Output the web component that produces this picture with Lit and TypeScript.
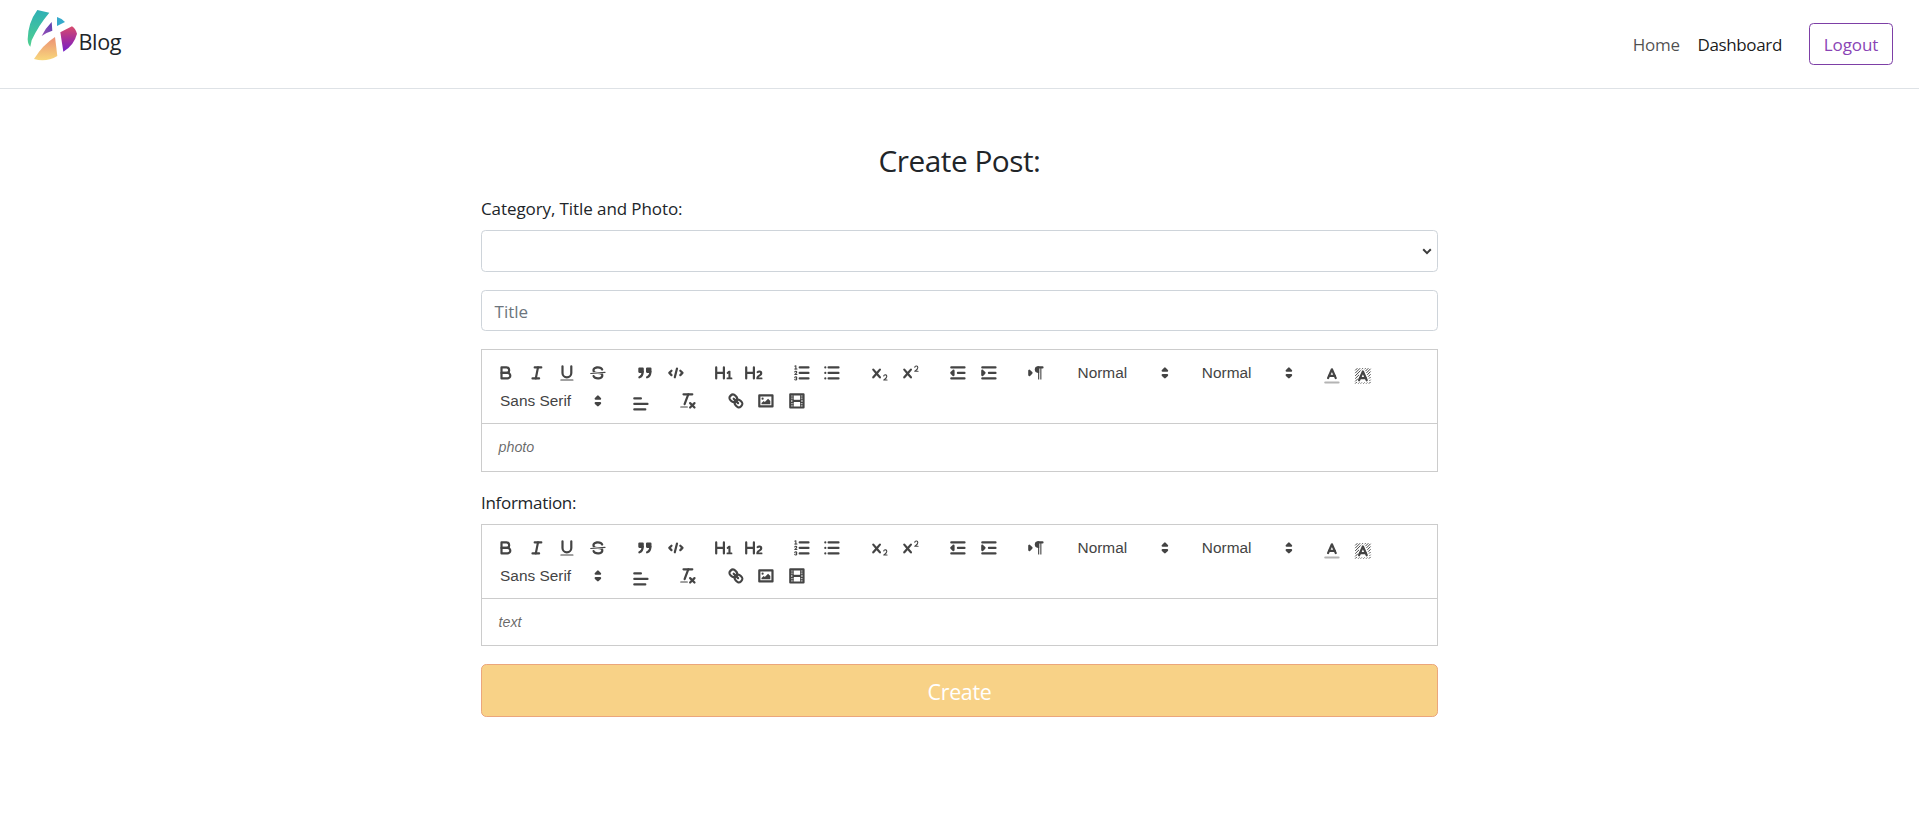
import { LitElement, html, svg, css } from "lit";
import { customElement, property } from "lit/decorators.js";

const crossMark = svg`<path class="f" d="M9.65,5.241a1,1,0,0,0-1.409.108L6,7.964,3.759,5.349A1,1,0,0,0,2.192,6.59178Q2.21541,6.6213,2.241,6.649L4.684,9.5,2.241,12.35A1,1,0,0,0,3.71,13.70722q0.02557-.02768.049-0.05722L6,11.036,8.241,13.65a1,1,0,1,0,1.567-1.24277Q9.78459,12.3777,9.759,12.35L7.316,9.5,9.759,6.651A1,1,0,0,0,9.65,5.241Z"/>`;

const icons: Record<string, unknown> = {
  bold: svg`<path class="s" d="M5,4H9.5A2.5,2.5,0,0,1,12,6.5v0A2.5,2.5,0,0,1,9.5,9H5V4Z"/><path class="s" d="M5,9h5.5A2.5,2.5,0,0,1,13,11.5v0A2.5,2.5,0,0,1,10.5,14H5V9Z"/>`,
  italic: svg`<line class="s" x1="7" x2="13" y1="4" y2="4"/><line class="s" x1="5" x2="11" y1="14" y2="14"/><line class="s" x1="8" x2="10" y1="14" y2="4"/>`,
  underline: svg`<path class="s" d="M5,3V9a4.012,4.012,0,0,0,4,4H9a4.012,4.012,0,0,0,4-4V3"/><rect class="f" height="1" rx="0.5" ry="0.5" width="12" x="3" y="15"/>`,
  strike: svg`<line class="s thin" x1="15.5" x2="2.5" y1="8.5" y2="9.5"/><path class="f" d="M9.007,8C6.542,7.791,6,7.519,6,6.5,6,5.792,7.283,5,9,5c1.571,0,2.765.679,2.969,1.309a1,1,0,0,0,1.9-.617C13.356,4.106,11.354,3,9,3,6.2,3,4,4.538,4,6.5a3.2,3.2,0,0,0,.5,1.843Z"/><path class="f" d="M8.984,10C11.457,10.208,12,10.479,12,11.5c0,0.708-1.283,1.5-3,1.5-1.571,0-2.765-.679-2.969-1.309a1,1,0,1,0-1.9.617C4.644,13.894,6.646,15,9,15c2.8,0,5-1.538,5-3.5a3.2,3.2,0,0,0-.5-1.843Z"/>`,
  quote: svg`<rect class="s f" height="3" width="3" x="4" y="5"/><rect class="s f" height="3" width="3" x="11" y="5"/><path class="s f" d="M7,8c0,4.031-3,5-3,5"/><path class="s f" d="M14,8c0,4.031-3,5-3,5"/>`,
  code: svg`<polyline class="s" points="5 7 3 9 5 11"/><polyline class="s" points="13 7 15 9 13 11"/><line class="s" x1="10" x2="8" y1="5" y2="13"/>`,
  h1: svg`<path class="f" d="M10,4V14a1,1,0,0,1-2,0V10H3v4a1,1,0,0,1-2,0V4A1,1,0,0,1,3,4V8H8V4a1,1,0,0,1,2,0Zm6.06787,9.209H14.98975V7.59863a.54085.54085,0,0,0-.605-.60547h-.62744a1.01119,1.01119,0,0,0-.748.29688L11.645,8.56641a.5435.5435,0,0,0-.022.8584l.28613.30762a.53861.53861,0,0,0,.84717.0332l.09912-.08789a1.2137,1.2137,0,0,0,.2417-.35254h.02246s-.01123.30859-.01123.60547V13.209H12.041a.54085.54085,0,0,0-.605.60547v.43945a.54085.54085,0,0,0,.605.60547h4.02686a.54085.54085,0,0,0,.605-.60547v-.43945A.54085.54085,0,0,0,16.06787,13.209Z"/>`,
  h2: svg`<path class="f" d="M16.73975,13.81445v.43945a.54085.54085,0,0,1-.605.60547H11.855a.58392.58392,0,0,1-.64893-.60547V14.0127c0-2.90527,3.39941-3.42187,3.39941-4.55469a.77675.77675,0,0,0-.84717-.78125,1.17684,1.17684,0,0,0-.83594.38477c-.2749.26367-.561.374-.85791.13184l-.4292-.34082c-.30811-.24219-.38525-.51758-.1543-.81445a2.97155,2.97155,0,0,1,2.45361-1.17676,2.45393,2.45393,0,0,1,2.68408,2.40918c0,2.45312-3.1792,2.92676-3.27832,3.93848h2.79443A.54085.54085,0,0,1,16.73975,13.81445ZM9,3A.99974.99974,0,0,0,8,4V8H3V4A1,1,0,0,0,1,4V14a1,1,0,0,0,2,0V10H8v4a1,1,0,0,0,2,0V4A.99974.99974,0,0,0,9,3Z"/>`,
  ordered: svg`<line class="s" x1="7" x2="15" y1="4" y2="4"/><line class="s" x1="7" x2="15" y1="9" y2="9"/><line class="s" x1="7" x2="15" y1="14" y2="14"/><line class="s thin" x1="2.5" x2="4.5" y1="5.5" y2="5.5"/><path class="f" d="M3.5,6A0.5,0.5,0,0,1,3,5.5V3.085l-0.276.138A0.5,0.5,0,0,1,2.053,3c-0.124-.247-0.023-0.324.224-0.447l1-.5A0.5,0.5,0,0,1,4,2.5v3A0.5,0.5,0,0,1,3.5,6Z"/><path class="s thin" d="M4.5,10.5h-2c0-.234,1.85-1.076,1.85-2.234A0.959,0.959,0,0,0,2.5,8.156"/><path class="s thin" d="M2.5,14.846a0.959,0.959,0,0,0,1.85-.11A0.7,0.7,0,0,0,3.75,14a0.688,0.688,0,0,0,.6-0.736,0.959,0.959,0,0,0-1.85-.109"/>`,
  bullet: svg`<line class="s" x1="6" x2="15" y1="4" y2="4"/><line class="s" x1="6" x2="15" y1="9" y2="9"/><line class="s" x1="6" x2="15" y1="14" y2="14"/><line class="s" x1="3" x2="3" y1="4" y2="4"/><line class="s" x1="3" x2="3" y1="9" y2="9"/><line class="s" x1="3" x2="3" y1="14" y2="14"/>`,
  sub: svg`<path class="f" d="M15.5,15H13.861a3.858,3.858,0,0,0,1.914-2.975,1.8,1.8,0,0,0-1.6-1.751A1.921,1.921,0,0,0,12.021,11.7a0.50013,0.50013,0,1,0,.957.291h0a0.914,0.914,0,0,1,1.053-.725,0.81,0.81,0,0,1,.744.762c0,1.076-1.16971,1.86982-1.93971,2.43082A1.45639,1.45639,0,0,0,12,15.5a0.5,0.5,0,0,0,.5.5h3A0.5,0.5,0,0,0,15.5,15Z"/>${crossMark}`,
  sup: svg`<path class="f" d="M15.5,7H13.861a4.015,4.015,0,0,0,1.914-2.975,1.8,1.8,0,0,0-1.6-1.751A1.922,1.922,0,0,0,12.021,3.7a0.5,0.5,0,1,0,.957.291,0.917,0.917,0,0,1,1.053-.725,0.81,0.81,0,0,1,.744.762c0,1.077-1.164,1.925-1.934,2.486A1.423,1.423,0,0,0,12,7.5a0.5,0.5,0,0,0,.5.5h3A0.5,0.5,0,0,0,15.5,7Z"/>${crossMark}`,
  outdent: svg`<line class="s" x1="3" x2="15" y1="14" y2="14"/><line class="s" x1="3" x2="15" y1="4" y2="4"/><line class="s" x1="9" x2="15" y1="9" y2="9"/><polyline class="s f" points="5 7 5 11 3 9 5 7"/>`,
  indent: svg`<line class="s" x1="3" x2="15" y1="14" y2="14"/><line class="s" x1="3" x2="15" y1="4" y2="4"/><line class="s" x1="9" x2="15" y1="9" y2="9"/><polyline class="s f" points="3 7 3 11 5 9 3 7"/>`,
  direction: svg`<polygon class="s f" points="3 11 5 9 3 7 3 11"/><line class="s" x1="15" x2="11" y1="4" y2="4"/><path class="f" d="M11,3a3,3,0,0,0,0,6h1V3H11Z"/><rect class="f" height="11" width="1" x="11" y="4"/><rect class="f" height="11" width="1" x="13" y="4"/>`,
  color: svg`<line class="s faint" x1="3" x2="15" y1="15" y2="15"/><polyline class="s" points="5.5 11 9 3 12.5 11"/><line class="s" x1="11.63" x2="6.38" y1="9" y2="9"/>`,
  background: svg`<path class="hatch" d="M2,4L4,2M2,6.500L6.500,2M2,9L7,4M2,11.500L5.500,8M2,14L4.500,11.500M2,16L3.500,14.500M8,3L9,2M10.500,3L11.500,2M11.300,4.700L14,2M12.200,6.300L16,2.500M13,8L16,5M13.800,9.700L16,7.500M14.600,11.400L16,10M15,13.500L16,12.500M14.500,16L16,14.500M12,16L13,15M9.500,16L10.500,15M7,16L8,15M4.800,16L5.800,15"/><polyline class="s" points="5.5 13 9 5 12.5 13"/><line class="s" x1="11.63" x2="6.38" y1="11" y2="11"/>`,
  align: svg`<line class="s" x1="3" x2="15" y1="9" y2="9"/><line class="s" x1="3" x2="13" y1="14" y2="14"/><line class="s" x1="3" x2="9" y1="4" y2="4"/>`,
  clean: svg`<line class="s" x1="5" x2="13" y1="3" y2="3"/><line class="s" x1="6" x2="9.35" y1="12" y2="3"/><line class="s" x1="11" x2="15" y1="11" y2="15"/><line class="s" x1="15" x2="11" y1="11" y2="15"/><rect class="f" height="1" rx="0.5" ry="0.5" width="7" x="2" y="14"/>`,
  link: svg`<line class="s" x1="7" x2="11" y1="7" y2="11"/><path class="s" d="M8.9,4.577a3.476,3.476,0,0,1,.36,4.679A3.476,3.476,0,0,1,4.577,8.9C3.185,7.5,2.035,6.4,4.217,4.217S7.5,3.185,8.9,4.577Z"/><path class="s" d="M13.423,9.1a3.476,3.476,0,0,0-4.679-.36,3.476,3.476,0,0,0,.36,4.679c1.392,1.392,2.5,2.542,4.679.36S14.815,10.5,13.423,9.1Z"/>`,
  image: svg`<rect class="s" height="10" width="12" x="3" y="4"/><circle class="f" cx="6" cy="7" r="1"/><polyline class="f" points="5 12 5 11 7 9 8 10 11 7 13 9 13 12 5 12"/>`,
  video: svg`<rect class="s" height="12" width="12" x="3" y="3"/><rect class="f" height="12" width="1" x="5" y="3"/><rect class="f" height="12" width="1" x="12" y="3"/><rect class="f" height="2" width="8" x="5" y="8"/>${[5, 7, 10, 12].map((y) => svg`<rect class="f" height="1" width="3" x="3" y=${y}/><rect class="f" height="1" width="3" x="12" y=${y}/>`)}`,
  updown: svg`<polygon class="s f" points="7 11 9 13 11 11 7 11"/><polygon class="s f" points="7 7 9 5 11 7 7 7"/>`,
};

const icon = (name: string) => html`<svg class="icon" viewBox="0 0 18 18">${icons[name]}</svg>`;
const dropped = new Set(["color", "background", "align"]);

@customElement("rich-editor")
class RichEditor extends LitElement {
  @property() placeholder = "";

  static styles = css`
    :host {
      display: block;
      border: 1px solid #ccc;
      font-family: "Liberation Sans", Arial, sans-serif;
      box-sizing: border-box;
    }
    .toolbar {
      display: flex;
      flex-wrap: wrap;
      align-content: flex-start;
      row-gap: 1.6px;
      box-sizing: border-box;
      height: 74px;
      padding: 9.9px 8.8px 0 8.3px;
      border-bottom: 1px solid #ccc;
    }
    .group {
      display: flex;
      margin-right: 16.5px;
      height: 26.4px;
    }
    .tool {
      display: flex;
      justify-content: center;
      align-items: center;
      width: 30.8px;
      height: 26.4px;
    }
    .tool.drop {
      box-sizing: border-box;
      height: 32px;
    }
    .picker {
      display: flex;
      align-items: center;
      justify-content: space-between;
      box-sizing: border-box;
      width: 107.8px;
      padding-left: 9.8px;
      padding-right: 1px;
      font-size: 15.4px;
      color: #444;
    }
    .picker.wide {
      width: 118.8px;
    }
    .icon {
      width: 19.8px;
      height: 19.8px;
      flex: none;
    }
    .s {
      fill: none;
      stroke: #444;
      stroke-width: 2;
      stroke-linecap: round;
      stroke-linejoin: round;
    }
    .f {
      fill: #444;
    }
    .thin {
      stroke-width: 1;
    }
    .hatch {
      fill: none;
      stroke: #444;
      stroke-width: 0.9;
    }
    .faint {
      opacity: 0.4;
    }
    .body {
      padding: 13.2px 16.5px 0;
      font-size: 14.3px;
      line-height: 20.3px;
      font-style: italic;
      color: rgba(0, 0, 0, 0.6);
    }
  `;

  private group(...names: string[]) {
    return html`<div class="group">
      ${names.map((n) => html`<span class="tool ${dropped.has(n) ? "drop" : ""}">${icon(n)}</span>`)}
    </div>`;
  }

  private picker(label: string, extra = "") {
    return html`<div class="group"><div class="picker ${extra}"><span>${label}</span>${icon("updown")}</div></div>`;
  }

  render() {
    return html`
      <div class="toolbar">
        ${this.group("bold", "italic", "underline", "strike")} ${this.group("quote", "code")}
        ${this.group("h1", "h2")} ${this.group("ordered", "bullet")} ${this.group("sub", "sup")}
        ${this.group("outdent", "indent")} ${this.group("direction")} ${this.picker("Normal")}
        ${this.picker("Normal")} ${this.group("color", "background")} ${this.picker("Sans Serif", "wide")}
        ${this.group("align")} ${this.group("clean")} ${this.group("link", "image", "video")}
      </div>
      <div class="body">${this.placeholder}</div>
    `;
  }
}

@customElement("app-root")
class AppRoot extends LitElement {
  static styles = css`
    :host {
      display: block;
      height: 828px;
      background: #fff;
      color: #212529;
      font-family: "Open Sans", "Noto Sans", sans-serif;
      font-size: 17px;
      overflow: hidden;
    }
    .bar {
      display: flex;
      justify-content: space-between;
      box-sizing: border-box;
      height: 89px;
      padding: 0 26px;
      border-bottom: 1px solid #dee2e6;
    }
    .brand {
      display: flex;
      align-items: flex-start;
      padding-top: 9px;
    }
    .logo {
      width: 52px;
      height: 53px;
    }
    .brand-name {
      font-size: 21.6px;
      line-height: 30px;
      margin-top: 18px;
      margin-left: 0.5px;
      letter-spacing: -0.35px;
    }
    .nav {
      display: flex;
      align-items: center;
      height: 88px;
    }
    .home {
      color: rgba(0, 0, 0, 0.7);
      margin-right: 17.5px;
      letter-spacing: -0.2px;
    }
    .dash {
      color: rgba(0, 0, 0, 0.9);
      margin-right: 27px;
      letter-spacing: -0.35px;
    }
    .logout {
      display: flex;
      align-items: center;
      justify-content: center;
      box-sizing: border-box;
      width: 84px;
      height: 42px;
      border: 1px solid #7d3fa6;
      border-radius: 4.4px;
      color: #8a44b5;
      letter-spacing: -0.05px;
    }
    .form {
      display: flex;
      flex-direction: column;
      width: 957px;
      margin: 0 auto;
    }
    .heading {
      margin: 53px 0 0;
      height: 37px;
      line-height: 37px;
      font-size: 29.8px;
      font-weight: 400;
      text-align: center;
      letter-spacing: -0.5px;
    }
    .label {
      height: 26px;
      line-height: 26px;
      letter-spacing: -0.3px;
    }
    .first {
      margin: 17px 0 8px;
      letter-spacing: -0.09px;
    }
    .second {
      margin: 18px 0 8px;
    }
    .field {
      display: flex;
      align-items: center;
      box-sizing: border-box;
      border: 1px solid #ced4da;
      border-radius: 4.4px;
      padding: 0 13.2px;
      color: #6c757d;
    }
    .select {
      height: 42px;
      justify-content: flex-end;
      padding-right: 5px;
      margin-bottom: 18px;
    }
    .chevron {
      width: 10px;
      height: 7px;
    }
    .title {
      height: 41px;
      padding-top: 2px;
      padding-left: 12.6px;
      margin-bottom: 18px;
      letter-spacing: 0;
    }
    .photo {
      height: 123px;
    }
    .info {
      height: 122px;
    }
    .create {
      display: flex;
      align-items: center;
      justify-content: center;
      box-sizing: border-box;
      height: 53px;
      padding-top: 1px;
      margin-top: 18px;
      border: 1px solid #eba67c;
      border-radius: 5.3px;
      background: #f8d287;
      color: #fff;
      font-size: 21.4px;
      letter-spacing: -0.3px;
    }
  `;

  render() {
    return html`
      <header class="bar">
        <div class="brand">
          <svg class="logo" viewBox="78 27 156 159">
            <defs>
              <linearGradient id="teal" x1="0" y1="0" x2="0" y2="1"><stop offset="0" stop-color="#2fb0b5" /><stop offset="1" stop-color="#4fd08f" /></linearGradient>
              <linearGradient id="pink" x1="0" y1="0" x2="0" y2="1"><stop offset="0" stop-color="#d84c6c" /><stop offset="0.5" stop-color="#a8309a" /><stop offset="1" stop-color="#7420c8" /></linearGradient>
              <linearGradient id="sand" x1="0" y1="0" x2="0" y2="1"><stop offset="0" stop-color="#ec8f74" /><stop offset="1" stop-color="#f8d87c" /></linearGradient>
              <linearGradient id="violet" x1="0" y1="1" x2="1" y2="0"><stop offset="0" stop-color="#9a4fb8" /><stop offset="1" stop-color="#5a3fb0" /></linearGradient>
            </defs>
            <path fill="url(#teal)" d="M112,30 L148,38 Q114,78 95,121 L91,140 Q84,135 83,118 Q84,68 112,30Z" />
            <path fill="url(#violet)" d="M155,66 L157,92 Q140,97 125,108 Q137,84 155,66Z" />
            <path fill="#35a9cb" d="M171,51 Q186,55 195,66 L171,78Z" />
            <path fill="url(#pink)" d="M216,79 Q226,85 231,101 Q222,136 190,155 L181,97Z" />
            <path fill="url(#sand)" d="M165,111 L172,168 Q138,188 102,177 Q128,135 165,111Z" />
          </svg>
          <span class="brand-name">Blog</span>
        </div>
        <nav class="nav">
          <span class="home">Home</span>
          <span class="dash">Dashboard</span>
          <span class="logout">Logout</span>
        </nav>
      </header>
      <main class="form">
        <h3 class="heading">Create Post:</h3>
        <div class="label first"><span>Category, Title and Photo:</span></div>
        <div class="field select">
          <svg class="chevron" viewBox="0 0 10 7"><path d="M1.200,1.300L5,5.100L8.800,1.300" fill="none" stroke="#3c3c3c" stroke-width="2" /></svg>
        </div>
        <div class="field title"><span>Title</span></div>
        <rich-editor class="photo" placeholder="photo"></rich-editor>
        <div class="label second"><span>Information:</span></div>
        <rich-editor class="info" placeholder="text"></rich-editor>
        <div class="create"><span>Create</span></div>
      </main>
    `;
  }
}
